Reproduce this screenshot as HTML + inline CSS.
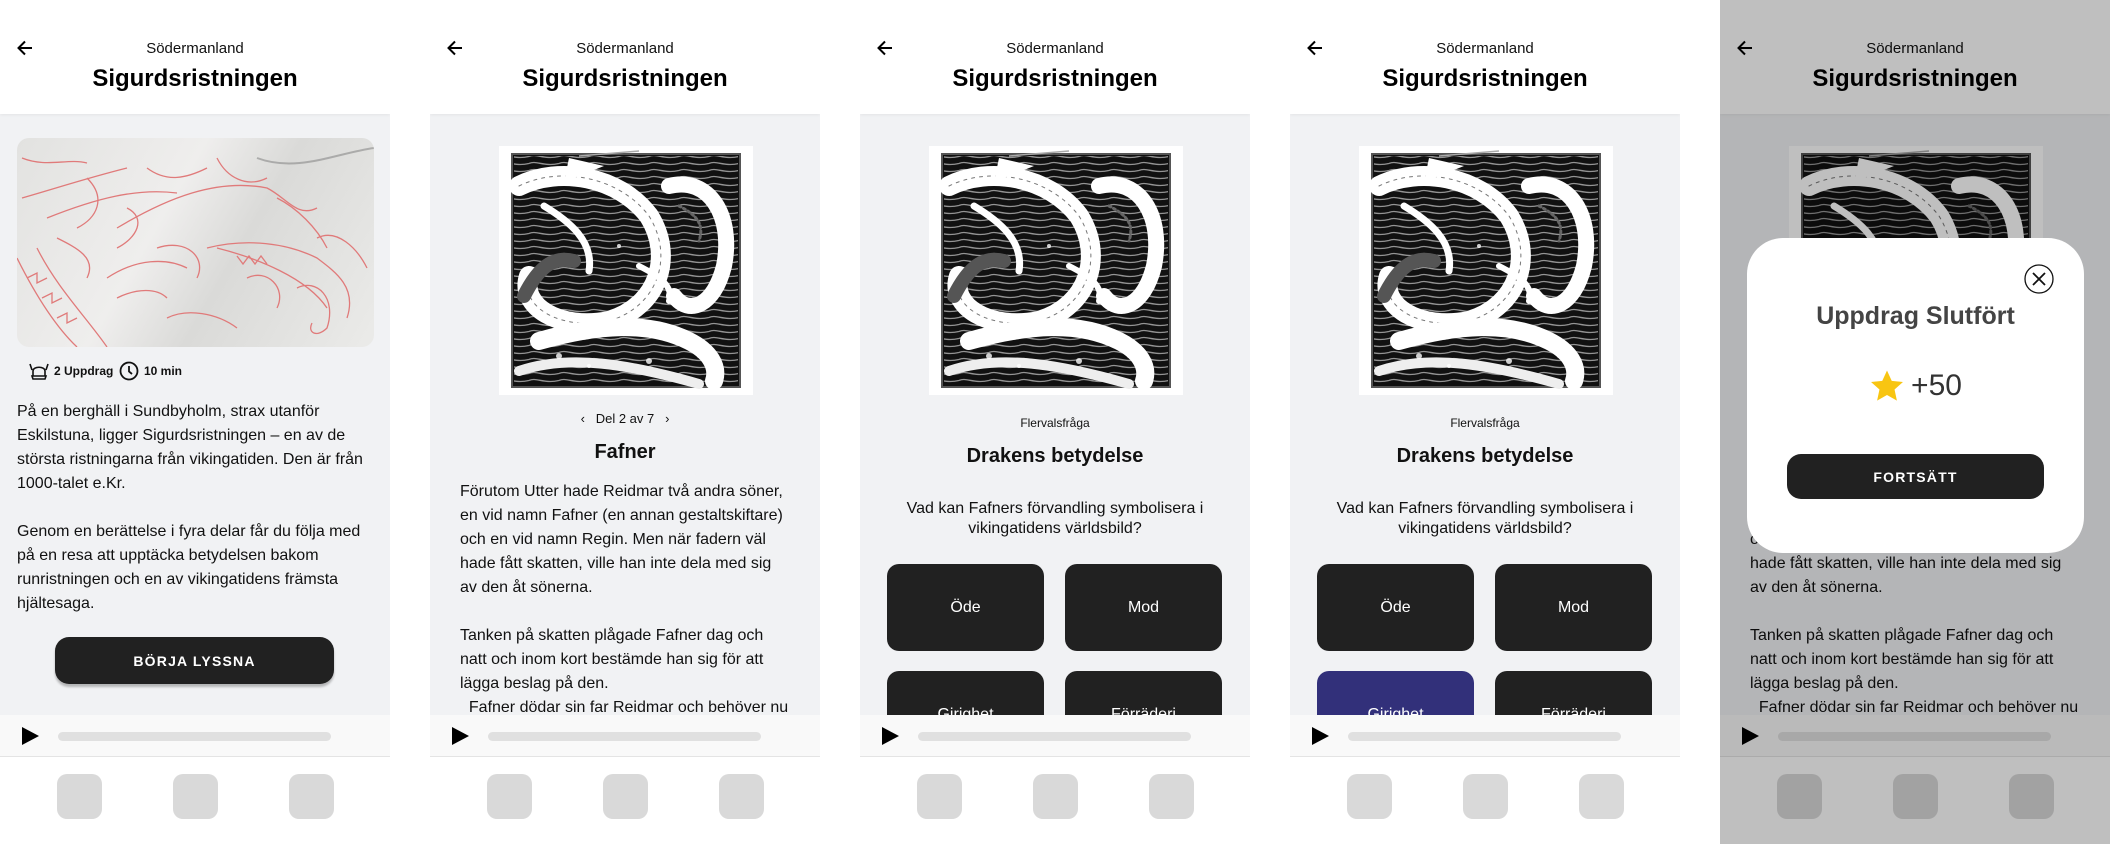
<!DOCTYPE html>
<html><head><meta charset="utf-8"><style>
*{margin:0;padding:0;box-sizing:border-box}
body{width:2110px;height:844px;background:#fff;position:relative;overflow:hidden;font-family:"Liberation Sans",Roboto,sans-serif;color:#111}
.p{position:absolute;top:0;width:390px;height:844px;overflow:hidden;background:#fff}
.hd{position:absolute;top:0;left:0;width:390px;height:114px;background:#fff;box-shadow:0 1px 3px rgba(0,0,0,.06);z-index:2}
.reg{position:absolute;top:40px;width:100%;text-align:center;font-size:15px;color:#111}
.ttl{position:absolute;top:65px;width:100%;text-align:center;font-size:24px;font-weight:bold;color:#000}
.back{position:absolute;left:15px;top:38px}
.ct{position:absolute;top:114px;left:0;width:390px;height:601px;background:#f1f2f4;overflow:hidden}
.pl{position:absolute;top:715px;left:0;width:390px;height:42px;background:#f9f9f9;border-bottom:1px solid #e4e4e4}
.tri{position:absolute;left:22px;top:12px;width:0;height:0;border-left:17px solid #000;border-top:9px solid transparent;border-bottom:9px solid transparent}
.bar{position:absolute;left:58px;top:17px;width:273px;height:9px;border-radius:5px;background:#e0e0e0}
.nv{position:absolute;top:757px;left:0;width:390px;height:87px;background:#fff}
.sq{position:absolute;top:17px;width:45px;height:45px;border-radius:10px;background:#d9d9d9}
.txt{position:absolute;font-size:16px;line-height:24px;color:#111}
.ill{position:absolute;left:69px;width:254px;height:249px;background:#fff}
.opt{position:absolute;width:157px;height:87px;border-radius:12px;background:#212121;color:#fff;font-size:16px;display:flex;align-items:center;justify-content:center}
.btn{position:absolute;background:#212121;color:#fff;font-weight:bold;font-size:14px;letter-spacing:1.2px;display:flex;align-items:center;justify-content:center;border-radius:14px}
</style></head><body>
<svg width="0" height="0" style="position:absolute">
<defs>
<pattern id="wv" width="30" height="7" patternUnits="userSpaceOnUse"><path d="M0 3.5 C7 0 15 7 30 3.5" fill="none" stroke="#fff" stroke-width="1.3"/></pattern>
<symbol id="art" viewBox="0 0 254 249">
<rect x="13" y="8" width="228" height="233" fill="#111" stroke="#555" stroke-width="2"/>
<rect x="15" y="10" width="224" height="229" fill="url(#wv)" opacity=".55"/>
<g fill="none" stroke-linecap="round">
<path d="M20 40 C60 20 120 30 150 70 C175 110 160 160 110 175 C60 185 20 160 30 130" stroke="#fff" stroke-width="20"/>
<path d="M20 40 C60 20 120 30 150 70 C175 110 160 160 110 175 C60 185 20 160 30 130" stroke="#777" stroke-width="1" stroke-dasharray="3 5"/>
<path d="M170 40 C210 30 235 70 225 120 C215 160 190 170 175 150" stroke="#fff" stroke-width="16"/>
<path d="M40 195 C100 178 150 175 190 195 C210 205 220 220 215 235" stroke="#fff" stroke-width="18"/>
<path d="M20 225 C70 208 130 218 200 238" stroke="#eee" stroke-width="10"/>
<path d="M45 60 C70 75 95 95 90 125" stroke="#fff" stroke-width="7"/>
<path d="M140 120 C160 130 175 140 170 155" stroke="#fff" stroke-width="6"/>
<path d="M25 150 C40 120 55 110 75 115" stroke="#555" stroke-width="14"/>
<path d="M180 60 C200 70 205 80 200 95" stroke="#666" stroke-width="3" stroke-dasharray="2 3"/>
</g>
<g fill="#fff" opacity=".8"><circle cx="60" cy="210" r="3"/><circle cx="90" cy="220" r="2"/><circle cx="150" cy="215" r="3"/><circle cx="200" cy="210" r="2"/><circle cx="120" cy="100" r="2"/></g>
<path d="M70 12 L105 20 L65 36 Z" fill="#fff"/>
<path d="M80 10 L140 5" stroke="#aaa" stroke-width="1.5"/>
</symbol>
<symbol id="bk" viewBox="0 0 20 20"><path d="M17 10H4M10 3.5L3.5 10 10 16.5" fill="none" stroke="#000" stroke-width="2"/></symbol>
</defs></svg>

<!-- PANEL 1 -->
<div class="p" style="left:0">
<div class="hd"><svg class="back" width="20" height="20" style="top:38px"><use href="#bk"/></svg><div class="reg">Södermanland</div><div class="ttl">Sigurdsristningen</div></div>
<div class="ct">
<div style="position:absolute;left:17px;top:24px;width:357px;height:209px;border-radius:12px;background:linear-gradient(120deg,#e2e2e0,#efeeed 40%,#dadad8 60%,#ebebe9);overflow:hidden">
<svg width="357" height="209"><g fill="none" stroke="#e07a7a" stroke-width="1.3">
<path d="M5 60 C40 50 70 40 110 30 M30 80 C80 60 120 50 160 55 M100 90 C150 60 200 40 250 50 C270 60 280 80 300 70 M190 110 C230 100 270 105 300 120 C320 135 340 150 330 180 M200 110 C240 120 290 140 310 170 M0 120 C20 160 40 190 60 209 M20 110 C40 150 70 180 90 209 M90 140 C120 120 150 120 170 130 M100 160 C120 150 140 150 150 160 M280 150 C300 140 320 160 310 190 C300 200 290 195 295 185"/>
<path d="M70 40 C90 60 80 80 60 90 M110 70 C130 80 120 100 100 110 M130 30 C150 45 170 40 190 30 M200 20 C210 40 230 50 250 40 M260 60 C280 70 300 90 310 110 M40 100 C60 110 80 120 70 140 M140 110 C170 100 190 120 180 140 M230 140 C250 130 270 150 260 170 M300 100 C320 90 340 110 350 130 M5 20 C30 30 50 20 70 25 M150 180 C170 170 200 175 220 190"/>
<path d="M10 140 l10 -5 l0 10 l10 -5 M25 160 l10 -5 l0 10 l10 -5 M40 180 l10 -5 l0 10 l10 -5 M220 118 l6 8 l6 -8 l6 8 l6 -8 l6 8"/></g>
<path d="M240 20 C280 35 320 15 357 10" stroke="#888" stroke-width="2" fill="none" opacity=".6"/></svg>
</div>
<svg style="position:absolute;left:28px;top:248px" width="22" height="18" viewBox="0 0 22 18"><path d="M2 2 L4 8 M20 2 L18 8 M5 9 C5 4 17 4 17 9 L17 14 L5 14 Z M4 14 H18 L17 17 H5 Z" fill="none" stroke="#111" stroke-width="1.6"/></svg>
<div style="position:absolute;left:54px;top:250px;font-size:12px;font-weight:bold">2 Uppdrag</div>
<svg style="position:absolute;left:119px;top:247px" width="20" height="20"><circle cx="10" cy="10" r="8.5" fill="none" stroke="#111" stroke-width="1.8"/><path d="M10 5V10.5L13 13" fill="none" stroke="#111" stroke-width="1.8"/></svg>
<div style="position:absolute;left:144px;top:250px;font-size:12px;font-weight:bold">10 min</div>
<div class="txt" style="left:17px;top:286px;width:360px">På en berghäll i Sundbyholm, strax utanför<br>Eskilstuna, ligger Sigurdsristningen – en av de<br>största ristningarna från vikingatiden. Den är från<br>1000-talet e.Kr.<br><br>Genom en berättelse i fyra delar får du följa med<br>på en resa att upptäcka betydelsen bakom<br>runristningen och en av vikingatidens främsta<br>hjältesaga.</div>
<div class="btn" style="left:55px;top:523px;width:279px;height:47px;box-shadow:0 3px 2px rgba(0,0,0,.25)">BÖRJA LYSSNA</div>
</div>
<div class="pl"><div class="tri"></div><div class="bar"></div></div>
<div class="nv"><div class="sq" style="left:57px"></div><div class="sq" style="left:173px"></div><div class="sq" style="left:289px"></div></div>
</div>

<!-- PANEL 2 -->
<div class="p" style="left:430px">
<div class="hd"><svg class="back" width="20" height="20"><use href="#bk"/></svg><div class="reg">Södermanland</div><div class="ttl">Sigurdsristningen</div></div>
<div class="ct">
<svg class="ill" style="top:32px" viewBox="0 0 254 249"><rect width="254" height="249" fill="#fff"/><use href="#art"/></svg>
<div style="position:absolute;top:297px;width:100%;text-align:center;font-size:13px">‹&nbsp;&nbsp;&nbsp;Del 2 av 7&nbsp;&nbsp;&nbsp;›</div>
<div style="position:absolute;top:327px;width:100%;text-align:center;font-size:20px;font-weight:bold">Fafner</div>
<div class="txt" style="left:30px;top:366px;width:360px">Förutom Utter hade Reidmar två andra söner,<br>en vid namn Fafner (en annan gestaltskiftare)<br>och en vid namn Regin. Men när fadern väl<br>hade fått skatten, ville han inte dela med sig<br>av den åt sönerna.<br><br>Tanken på skatten plågade Fafner dag och<br>natt och inom kort bestämde han sig för att<br>lägga beslag på den.<br>&nbsp;&nbsp;Fafner dödar sin far Reidmar och behöver nu</div>
</div>
<div class="pl"><div class="tri"></div><div class="bar"></div></div>
<div class="nv"><div class="sq" style="left:57px"></div><div class="sq" style="left:173px"></div><div class="sq" style="left:289px"></div></div>
</div>

<!-- PANEL 3 -->
<div class="p" style="left:860px">
<div class="hd"><svg class="back" width="20" height="20"><use href="#bk"/></svg><div class="reg">Södermanland</div><div class="ttl">Sigurdsristningen</div></div>
<div class="ct">
<svg class="ill" style="top:32px" viewBox="0 0 254 249"><rect width="254" height="249" fill="#fff"/><use href="#art"/></svg>
<div style="position:absolute;top:302px;width:100%;text-align:center;font-size:12px">Flervalsfråga</div>
<div style="position:absolute;top:331px;width:100%;text-align:center;font-size:20px;font-weight:bold">Drakens betydelse</div>
<div style="position:absolute;top:385px;width:100%;text-align:center;font-size:16px;line-height:20px">Vad kan Fafners förvandling symbolisera i<br>vikingatidens världsbild?</div>
<div class="opt" style="left:27px;top:450px">Öde</div><div class="opt" style="left:205px;top:450px">Mod</div>
<div class="opt" style="left:27px;top:557px">Girighet</div><div class="opt" style="left:205px;top:557px">Förräderi</div>
</div>
<div class="pl"><div class="tri"></div><div class="bar"></div></div>
<div class="nv"><div class="sq" style="left:57px"></div><div class="sq" style="left:173px"></div><div class="sq" style="left:289px"></div></div>
</div>

<!-- PANEL 4 -->
<div class="p" style="left:1290px">
<div class="hd"><svg class="back" width="20" height="20"><use href="#bk"/></svg><div class="reg">Södermanland</div><div class="ttl">Sigurdsristningen</div></div>
<div class="ct">
<svg class="ill" style="top:32px" viewBox="0 0 254 249"><rect width="254" height="249" fill="#fff"/><use href="#art"/></svg>
<div style="position:absolute;top:302px;width:100%;text-align:center;font-size:12px">Flervalsfråga</div>
<div style="position:absolute;top:331px;width:100%;text-align:center;font-size:20px;font-weight:bold">Drakens betydelse</div>
<div style="position:absolute;top:385px;width:100%;text-align:center;font-size:16px;line-height:20px">Vad kan Fafners förvandling symbolisera i<br>vikingatidens världsbild?</div>
<div class="opt" style="left:27px;top:450px">Öde</div><div class="opt" style="left:205px;top:450px">Mod</div>
<div class="opt" style="left:27px;top:557px;background:#32307a">Girighet</div><div class="opt" style="left:205px;top:557px">Förräderi</div>
</div>
<div class="pl"><div class="tri"></div><div class="bar"></div></div>
<div class="nv"><div class="sq" style="left:57px"></div><div class="sq" style="left:173px"></div><div class="sq" style="left:289px"></div></div>
</div>

<!-- PANEL 5 -->
<div class="p" style="left:1720px">
<div class="hd"><svg class="back" width="20" height="20"><use href="#bk"/></svg><div class="reg">Södermanland</div><div class="ttl">Sigurdsristningen</div></div>
<div class="ct">
<svg class="ill" style="top:32px" viewBox="0 0 254 249"><rect width="254" height="249" fill="#fff"/><use href="#art"/></svg>
<div style="position:absolute;top:297px;width:100%;text-align:center;font-size:13px">‹&nbsp;&nbsp;&nbsp;Del 2 av 7&nbsp;&nbsp;&nbsp;›</div>
<div style="position:absolute;top:327px;width:100%;text-align:center;font-size:20px;font-weight:bold">Fafner</div>
<div class="txt" style="left:30px;top:366px;width:360px">Förutom Utter hade Reidmar två andra söner,<br>en vid namn Fafner (en annan gestaltskiftare)<br>och en vid namn Regin. Men när fadern väl<br>hade fått skatten, ville han inte dela med sig<br>av den åt sönerna.<br><br>Tanken på skatten plågade Fafner dag och<br>natt och inom kort bestämde han sig för att<br>lägga beslag på den.<br>&nbsp;&nbsp;Fafner dödar sin far Reidmar och behöver nu</div>
</div>
<div class="pl"><div class="tri"></div><div class="bar"></div></div>
<div class="nv"><div class="sq" style="left:57px"></div><div class="sq" style="left:173px"></div><div class="sq" style="left:289px"></div></div>
<div style="position:absolute;left:0;top:0;width:390px;height:844px;background:rgba(0,0,0,.25);z-index:5"></div>
<div style="position:absolute;left:27px;top:238px;width:337px;height:315px;border-radius:36px;background:#fff;z-index:6">
<svg style="position:absolute;left:277px;top:26px" width="30" height="30"><circle cx="15" cy="15" r="14" fill="none" stroke="#111" stroke-width="1.3"/><path d="M9 9L21 21M21 9L9 21" stroke="#111" stroke-width="1.8"/></svg>
<div style="position:absolute;top:64px;width:100%;text-align:center;font-size:25px;font-weight:bold;color:#444">Uppdrag Slutfört</div>
<div style="position:absolute;top:131px;width:100%;text-align:center;font-size:30px;color:#333;display:flex;justify-content:center;align-items:center;gap:6px"><svg width="36" height="34" viewBox="0 0 24 23"><path d="M12 1l3.2 7 7.6.8-5.7 5.1 1.6 7.5L12 17.6 5.3 21.4l1.6-7.5L1.2 8.8l7.6-.8z" fill="#f8c512"/></svg><span>+50</span></div>
<div class="btn" style="left:40px;top:216px;width:257px;height:45px">FORTSÄTT</div>
</div>
</div>
</body></html>
